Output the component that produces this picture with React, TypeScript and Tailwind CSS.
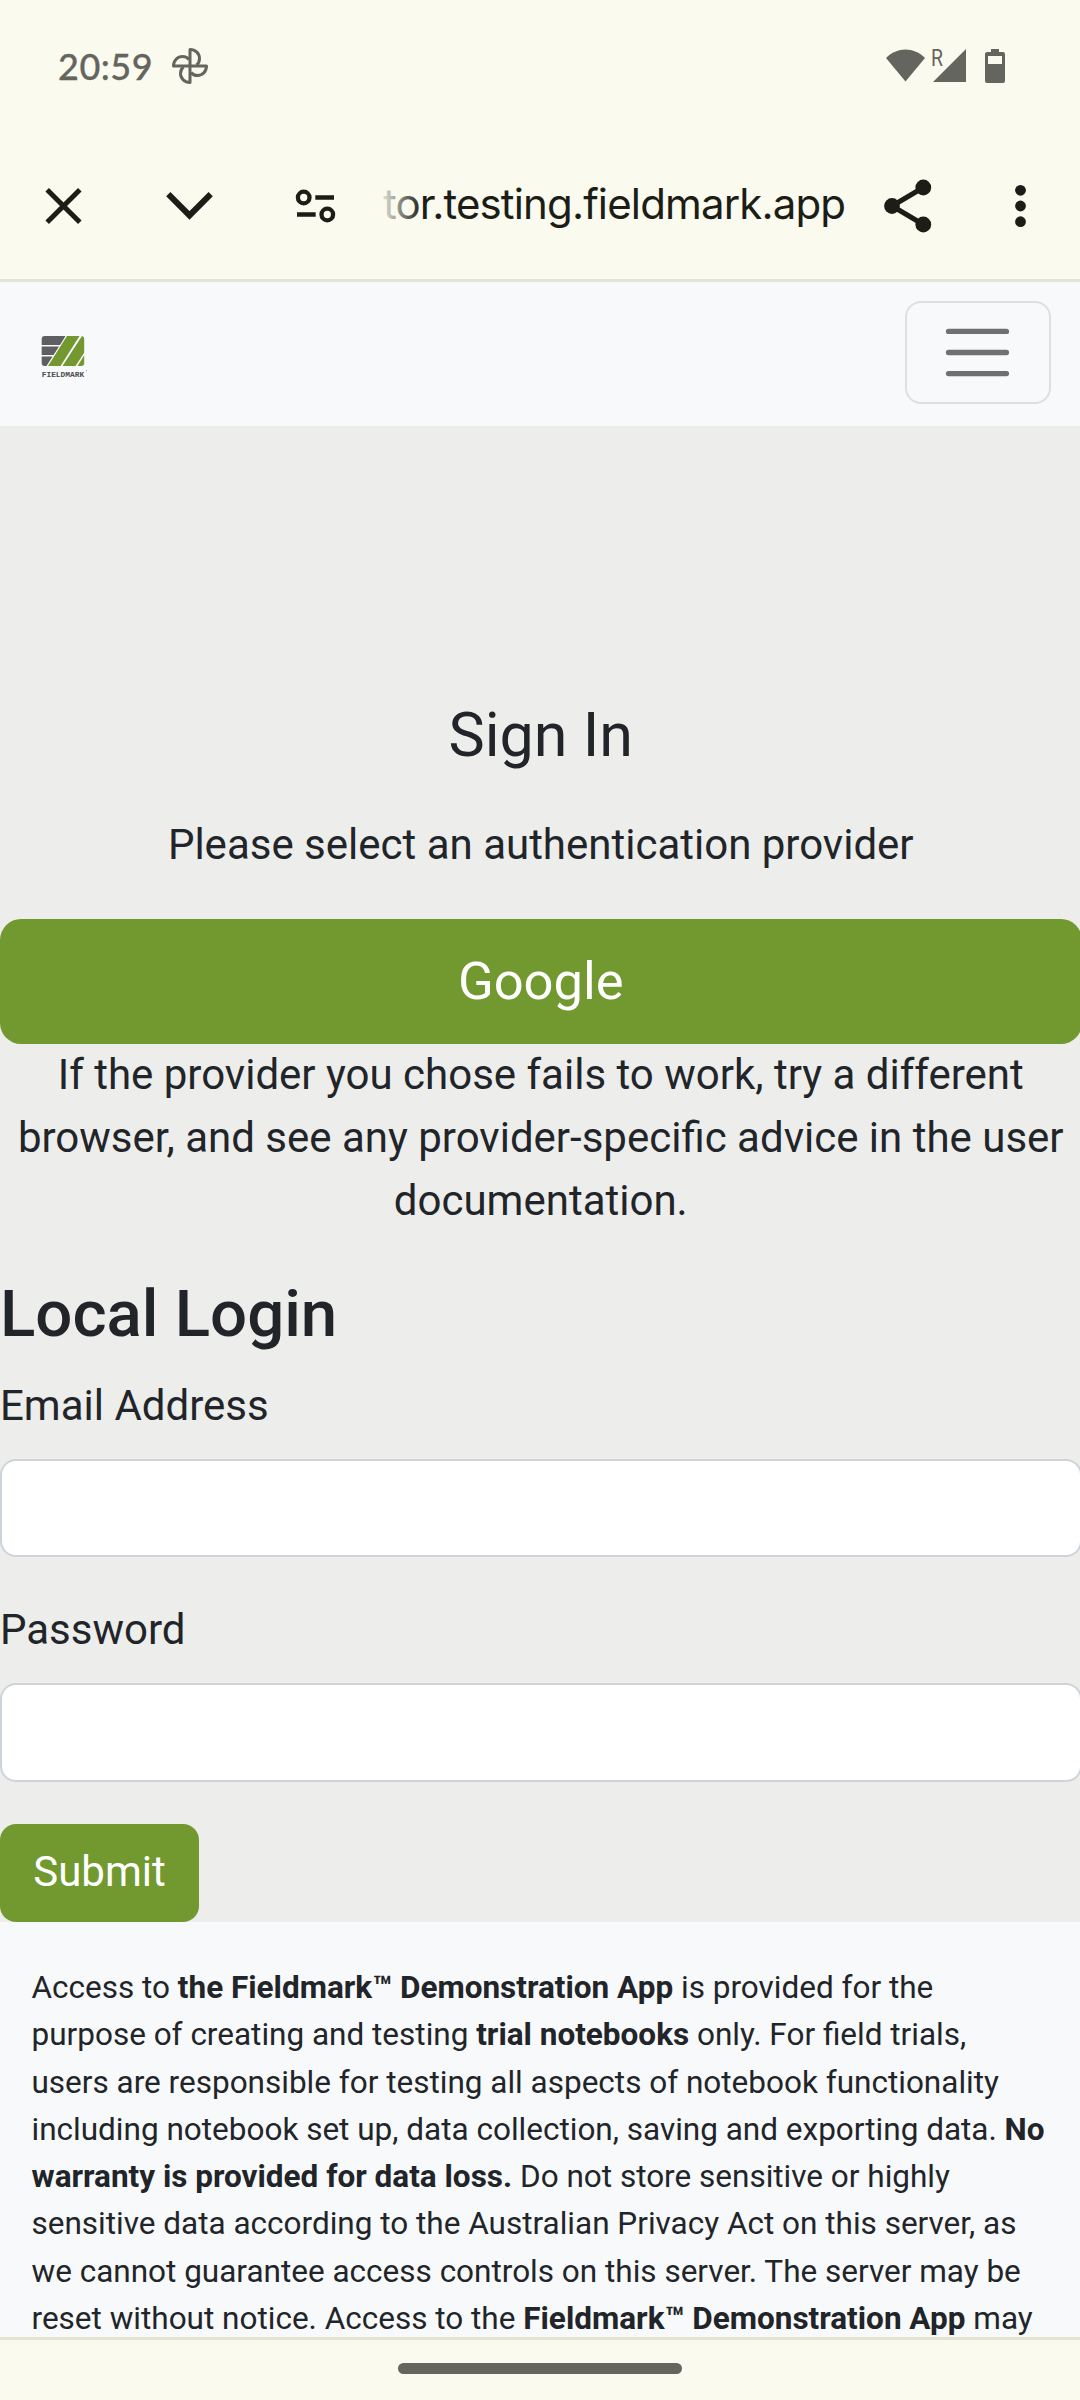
import React from "react";

function StatusBar() {
  return (
    <div className="flex h-[132px] items-center justify-between pr-[72px] pl-[58px] text-[#64655e]">
      <div className="flex items-center">
        <span className="w-[114px] font-['Lato'] text-[36px] leading-[40px] font-medium tracking-[0.500px] [-webkit-text-stroke:0.3px_#64655e]">20:59</span>
        <svg className="h-[36px] w-[36px]" viewBox="0 0 36 36" fill="none" stroke="currentColor" strokeWidth="3" strokeLinejoin="round">
          {[0, 90, 180, 270].map((a) => (
            <path key={a} transform={`rotate(${a} 18 18)`} d="M18 18V1.500C23.500 1.500 27.500 5.500 27.500 10.500C27.500 13.500 26.500 15.500 24.500 17" />
          ))}
        </svg>
      </div>
      <svg className="h-[48px] w-[122px]" viewBox="886 42 122 48" fill="currentColor">
        <path d="M886 58C897 46.500 914 46.500 925 58L905.500 81.500Z" />
        <path d="M966 49V82H933Z" />
        <path d="M991 49h8v3h4a2 2 0 0 1 2 2v27a2 2 0 0 1-2 2h-16a2 2 0 0 1-2-2v-27a2 2 0 0 1 2-2h4zM988 56v8h14v-8z" fillRule="evenodd" />
        <text x="931" y="65.500" fontSize="23" textLength="12" lengthAdjust="spacingAndGlyphs" fontFamily="Roboto">R</text>
      </svg>
    </div>
  );
}

function BrowserBar() {
  return (
    <div className="flex h-[150px] items-center border-b-[3px] border-[#e3e4d6] text-[#1c1d17]">
      <svg className="h-[60px] w-[340px] shrink-0" viewBox="0 175.500 340 60" fill="none" stroke="currentColor">
        <path d="M47.200 189.200L79.800 221.800M79.800 189.200L47.200 221.800" strokeWidth="5" />
        <path d="M168.300 193.700L189.500 214.900L210.700 193.700" strokeWidth="6" />
        <g strokeWidth="4.300">
          <circle cx="303.700" cy="197" r="5.800" />
          <circle cx="327.300" cy="214" r="5.800" />
          <path d="M315.300 197H334M297 214H315.700" />
        </g>
      </svg>
      <div className="relative ml-[38px] h-[60px] w-[490px] overflow-hidden">
        <div className="ml-[5px] font-['Inter'] text-[42px] leading-[56px] tracking-[-0.850px] whitespace-nowrap">tor.testing.fieldmark.app</div>
        <div className="absolute top-0 left-0 h-full w-[44px] bg-linear-to-r from-[#fafaee] to-[#fafaee]/0" />
      </div>
      <svg className="h-[60px] w-[212px] shrink-0" viewBox="868 175.500 212 60" fill="currentColor">
        <path d="M923.300 187L892 205.500L923.300 224" fill="none" stroke="currentColor" strokeWidth="5" />
        <circle cx="892" cy="205.500" r="7.900" />
        <circle cx="923.300" cy="187" r="7.900" />
        <circle cx="923.300" cy="224" r="7.900" />
        <circle cx="1020.500" cy="189.800" r="5.400" />
        <circle cx="1020.500" cy="205.500" r="5.400" />
        <circle cx="1020.500" cy="221.200" r="5.400" />
      </svg>
    </div>
  );
}

function Logo() {
  return (
    <svg className="mt-[9px] h-[45px] w-[48px]" viewBox="41 335 48 45">
      <clipPath id="badge">
        <rect x="41.700" y="336" width="42.500" height="30" rx="3" />
      </clipPath>
      <g clipPath="url(#badge)">
        <path d="M41 336H65.500L60 345H41ZM41 346.500H59L53.500 355H41ZM41 356.500H52.500L46.500 366H41Z" fill="#5f5e60" />
        <path d="M67 336H79.500L60.500 366H48ZM82 336H85V351.500L75.500 366H62.500ZM85 354V366H77.500Z" fill="#72982f" />
      </g>
      <text x="41.700" y="377.200" fontSize="7" fontWeight="700" textLength="42.500" lengthAdjust="spacingAndGlyphs" fontFamily="Liberation Mono" fill="#4c4c50">FIELDMARK</text>
      <circle cx="86.500" cy="370.800" r="0.500" fill="#77777a" />
    </svg>
  );
}

function Navbar() {
  return (
    <nav className="flex h-[144px] items-center justify-between bg-[#f8f9fb] pr-[29px] pb-[3px] pl-[41px]">
      <Logo />
      <button className="flex h-[103px] w-[146px] items-center justify-center rounded-[16px] border-2 border-[#dedfe1] pr-px">
        <svg className="h-[79px] w-[79px]" viewBox="0 0 30 30" stroke="#6f7071" strokeWidth="2" strokeLinecap="round">
          <path d="M4 7h22M4 15h22M4 23h22" />
        </svg>
      </button>
    </nav>
  );
}

function Field({ label, type }: { label: string; type: string }) {
  return (
    <label className="mb-[42px] block">
      <span className="mb-[23px] block leading-[61px]">{label}</span>
      <input type={type} className="block h-[98.500px] w-[1081.500px] rounded-[16px] border-2 border-[#ced4da] bg-white px-8" />
    </label>
  );
}

export default function App() {
  return (
    <div className="flex h-[2400px] w-[1080px] flex-col overflow-hidden bg-[#fafaee] font-['Roboto'] text-[42px] text-[#212529]">
      <StatusBar />
      <BrowserBar />
      <Navbar />
      <main className="h-[1496px] shrink-0 overflow-hidden bg-[#ededeb] pt-[273px]">
        <div className="w-[1081.500px] text-center">
          <h1 className="mb-[41px] text-[61px] leading-[73px]">Sign In</h1>
          <p className="mb-[43px] leading-[63px]">Please select an authentication provider</p>
          <button className="block h-[125px] w-full rounded-[21px] bg-[#729930] text-[52.500px] text-white">Google</button>
          <p className="-mt-px mb-[43px] leading-[63px]">
            If the provider you chose fails to work, try a different browser, and see any provider-specific advice in the user documentation.
          </p>
        </div>
        <h2 className="mb-[21px] text-[65.400px] leading-[78.500px] font-medium">Local Login</h2>
        <form>
          <Field label="Email Address" type="email" />
          <Field label="Password" type="password" />
          <button type="button" className="block h-[98px] w-[199px] rounded-[16px] bg-[#729930] pb-[2px] text-white">Submit</button>
        </form>
      </main>
      <footer className="h-[415px] shrink-0 overflow-hidden bg-[#f8f9fb] px-[31.500px] pt-[42px]">
        <p className="text-[31.500px] leading-[47.250px]">
          Access to <b>the Fieldmark™ Demonstration App</b> is provided for the purpose of creating and testing <b>trial notebooks</b> only. For field trials, users are responsible for testing all aspects of notebook functionality including notebook set up, data collection, saving and exporting data. <b>No warranty is provided for data loss.</b> Do not store sensitive or highly sensitive data according to the Australian Privacy Act on this server, as we cannot guarantee access controls on this server. The server may be reset without notice. Access to the <b>Fieldmark™ Demonstration App</b> may
        </p>
      </footer>
      <div className="flex h-[63px] shrink-0 items-start justify-center border-t-[3px] border-[#e3e4d6] pt-[23px]">
        <div className="h-[11px] w-[284px] rounded-full bg-[#64655e]" />
      </div>
    </div>
  );
}
